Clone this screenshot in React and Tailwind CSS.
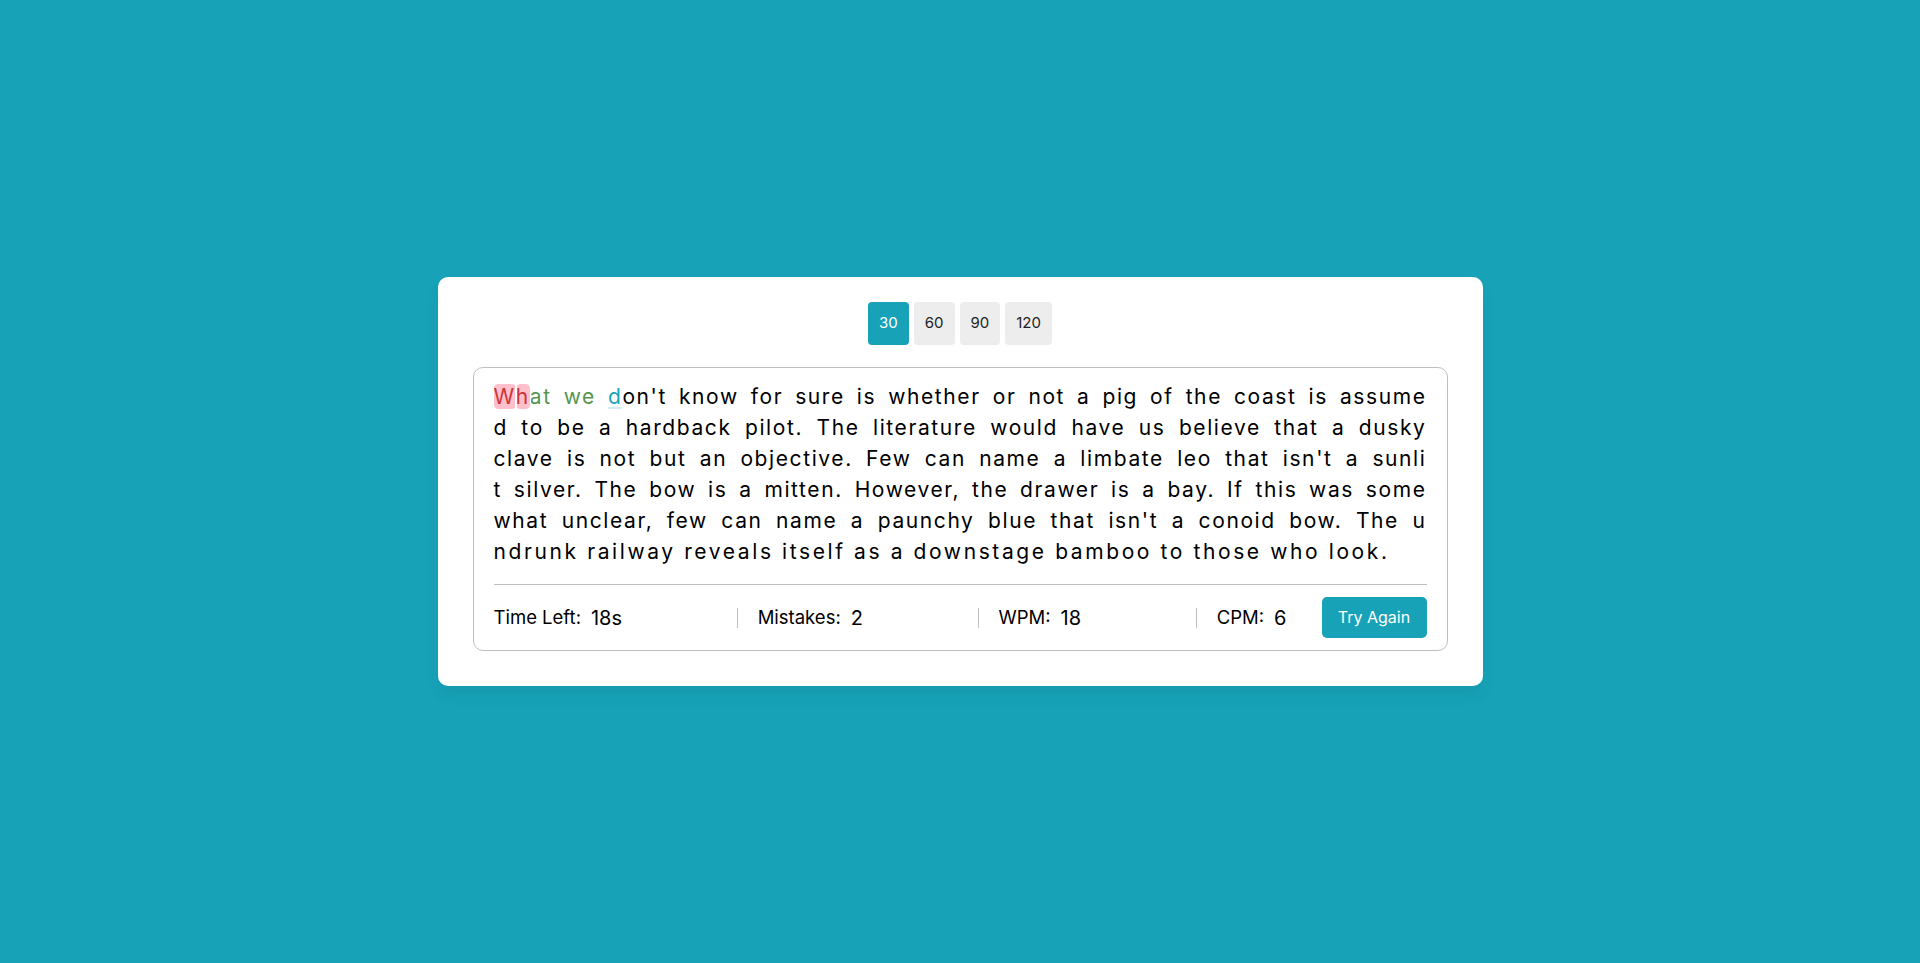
import { useState } from 'react';

const lines = [
    "on't know for sure is whether or not a pig of the coast is assume",
    "d to be a hardback pilot. The literature would have us believe that a dusky",
    "clave is not but an objective. Few can name a limbate leo that isn't a sunli",
    "t silver. The bow is a mitten. However, the drawer is a bay. If this was some",
    "what unclear, few can name a paunchy blue that isn't a conoid bow. The u",
];
const lastLine = "ndrunk railway reveals itself as a downstage bamboo to those who look.";

const times = [30, 60, 90, 120];

const stats = [
    { label: "Time Left:", value: "18s" },
    { label: "Mistakes:", value: "2" },
    { label: "WPM:", value: "18" },
    { label: "CPM:", value: "6" },
];

const App = () => {
    const [time, setTime] = useState(30);

    return (
        <div className="min-h-screen w-full flex items-center justify-center bg-[#17a2b8] font-['Inter',sans-serif] text-black">
            <div className="w-[1045px] bg-white rounded-[10px] px-[35px] pt-[25px] pb-[35px] shadow-[0_10px_15px_rgba(0,0,0,0.05)]">
                {/* Time options */}
                <div className="flex justify-center gap-[5px] mb-[22px]">
                    {times.map((t) => (
                        <button
                            key={t}
                            onClick={() => setTime(t)}
                            className={
                                t === time
                                    ? "h-[43px] px-[11px] rounded-[4px] bg-[#17a2b8] text-white text-[15px]"
                                    : "h-[43px] px-[11px] rounded-[4px] bg-[#ededed] text-[#222] text-[15px]"
                            }
                        >
                            {t}
                        </button>
                    ))}
                </div>

                {/* Content box */}
                <div className="border border-[#bfbfbf] rounded-[10px] px-[20px] pt-[13px]">
                    <div className="text-[21px] leading-[31px] tracking-[1.6px] text-black">
                        <p className="whitespace-nowrap text-justify [text-align-last:justify]">
                            <span className="bg-[#ffc0cb] text-[#cb3439] rounded-[4px] outline outline-1 outline-white">W</span>
                            <span className="bg-[#ffc0cb] text-[#cb3439] rounded-[4px] outline outline-1 outline-white">h</span>
                            <span className="text-[#56964f]">at we </span>
                            <span className="relative text-[#17a2b8]">
                                d
                                <span className="absolute left-0 bottom-0 h-[2px] w-full rounded bg-[#17a2b8] opacity-20"></span>
                            </span>
                            {lines[0]}
                        </p>
                        {lines.slice(1).map((line, i) => (
                            <p key={i} className="whitespace-nowrap text-justify [text-align-last:justify]">{line}</p>
                        ))}
                        <p className="tracking-[2.6px]">{lastLine}</p>
                    </div>

                    {/* Results */}
                    <div className="mt-[17px] border-t border-[#bfbfbf] py-[12px] flex items-center justify-between">
                        <ul className="w-[calc(100%-140px)] flex items-center justify-between">
                            {stats.map((s, i) => (
                                <li
                                    key={i}
                                    className={
                                        i === 0
                                            ? "flex items-center h-[20px]"
                                            : "flex items-center h-[20px] pl-[20px] border-l border-[#bfbfbf]"
                                    }
                                >
                                    <p className="text-[18.5px]">{s.label}</p>
                                    <span className="ml-[10px] text-[20px]">{s.value}</span>
                                </li>
                            ))}
                        </ul>
                        <button className="w-[105px] py-[8px] rounded-[5px] bg-[#17a2b8] text-white text-[16px] leading-[25px]">
                            Try Again
                        </button>
                    </div>
                </div>
            </div>
        </div>
    );
};

export default App;
